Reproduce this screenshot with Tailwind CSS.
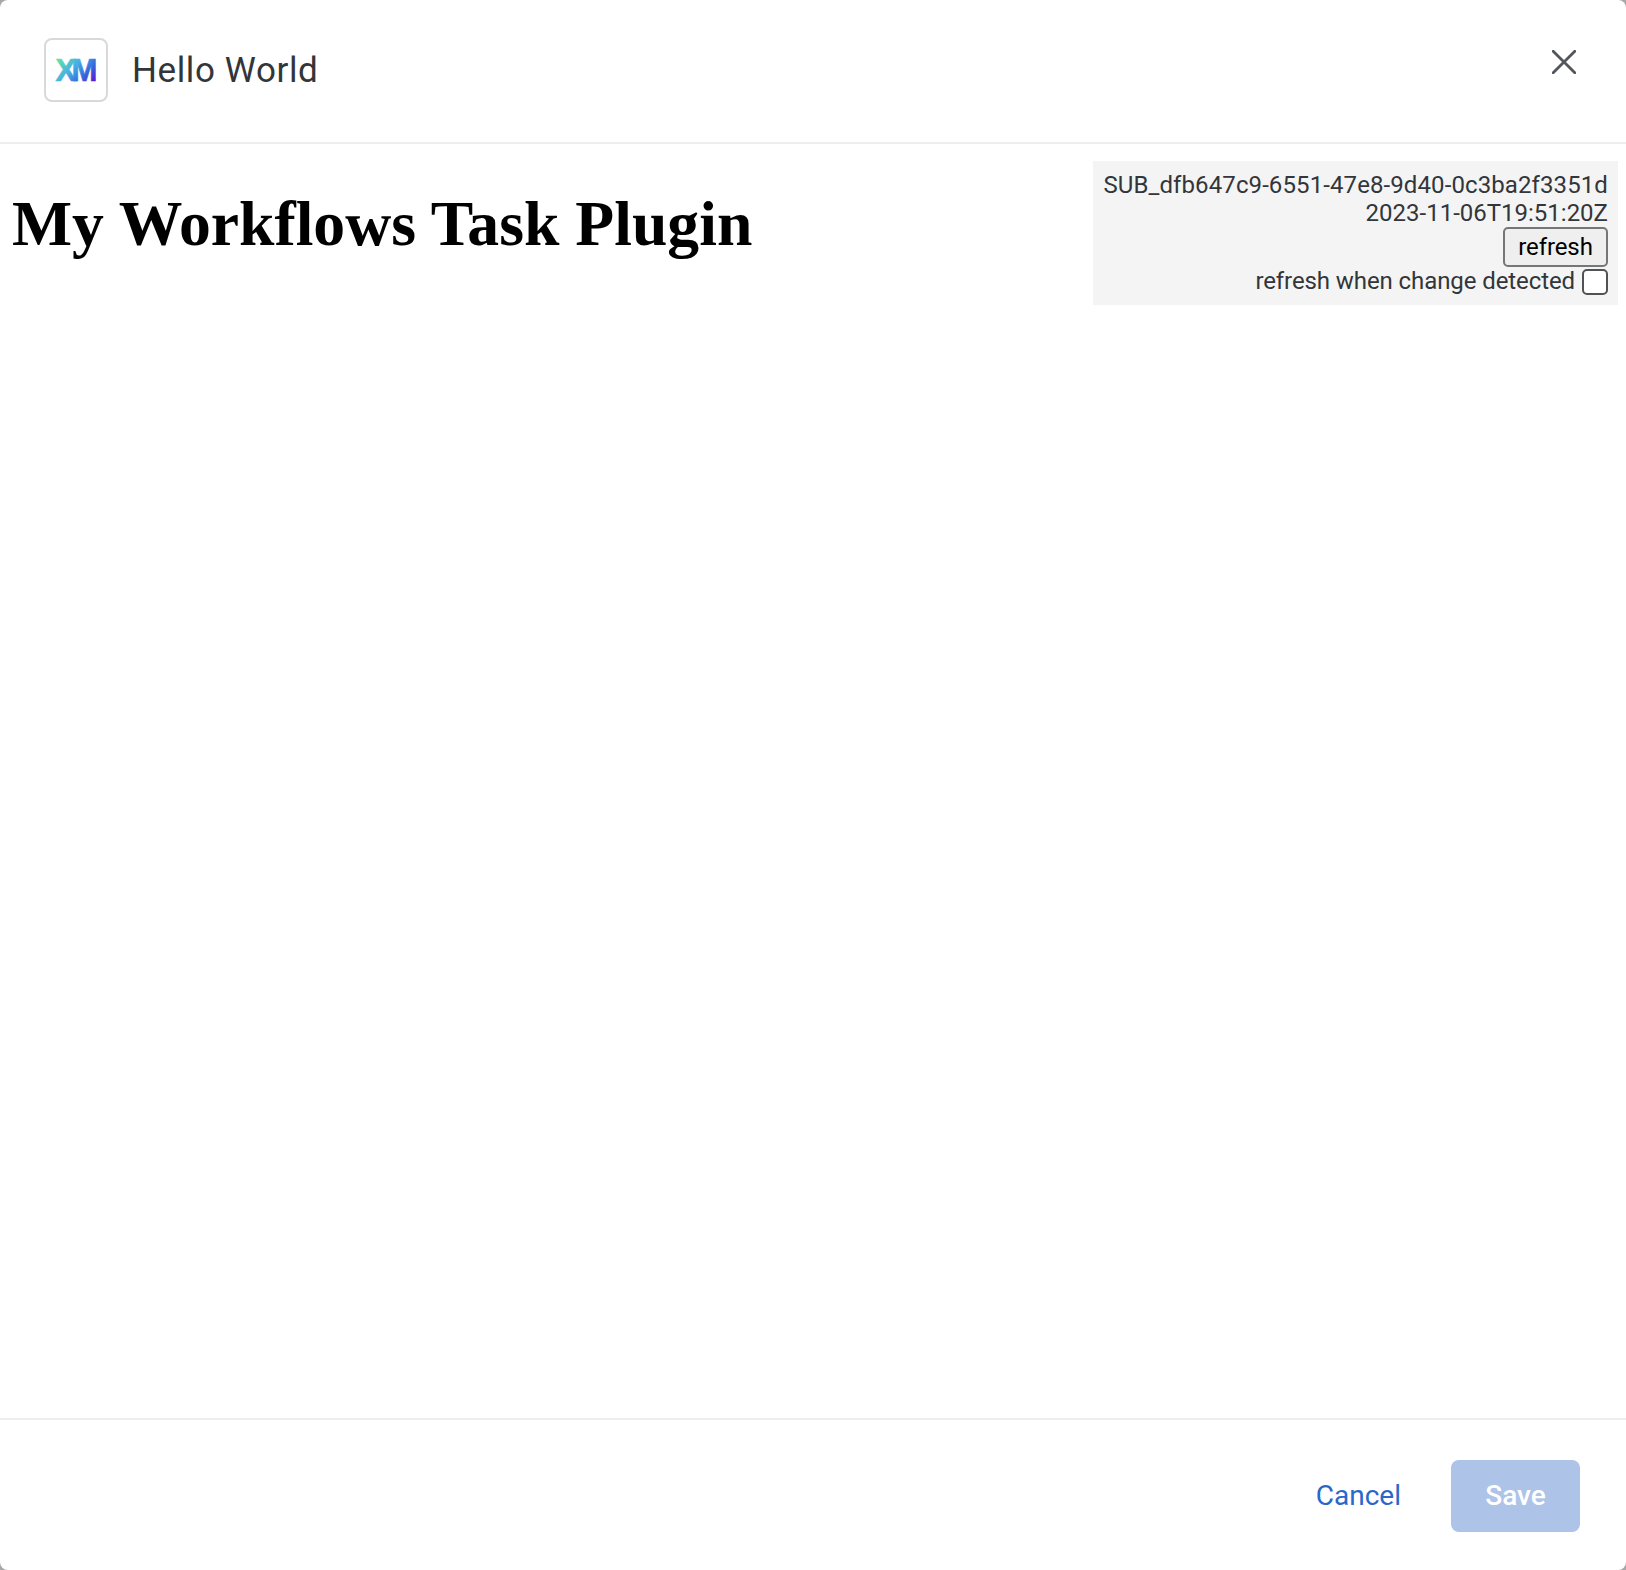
<!DOCTYPE html>
<html lang="en">
<head>
<meta charset="utf-8">
<title>Hello World</title>
<script src="https://cdn.jsdelivr.net/npm/@tailwindcss/browser@4"></script>
</head>
<body class="bg-[#a8a8a8] font-['Roboto',sans-serif] text-[#32363a]">
<div class="flex h-[1570px] w-[1626px] flex-col overflow-hidden rounded-[8px] bg-white">
  <header class="flex h-36 shrink-0 items-start justify-between border-b-2 border-[#eeeeee] pl-11 pr-[50px]">
    <div class="flex items-center gap-6 pt-[38px]">
      <div class="flex size-16 items-center justify-center rounded-lg border-2 border-[#d9d9d9]">
        <svg class="size-[60px]" viewBox="0 0 60 60" aria-label="XM">
          <defs><linearGradient id="xm" gradientUnits="userSpaceOnUse" x1="13" y1="16" x2="45" y2="46"><stop offset="0" stop-color="#5fe8a0"/><stop offset=".42" stop-color="#48aee6"/><stop offset=".72" stop-color="#3568dc"/><stop offset="1" stop-color="#5a14d4"/></linearGradient></defs>
          <text x="9.5" y="40.5" font-family="Liberation Sans, sans-serif" font-weight="700" font-size="31" letter-spacing="-4.6" fill="url(#xm)" stroke="url(#xm)" stroke-width=".7">XM</text>
        </svg>
      </div>
      <h2 class="pt-0.5 text-[35px] leading-[48px] font-[450] tracking-[0.6px]">Hello World</h2>
    </div>
    <button class="mt-[50px]" aria-label="Close">
      <svg class="size-6" viewBox="0 0 24 24" fill="none" stroke="#53565a" stroke-width="2.8" stroke-linecap="round"><path d="M1.2 1.2 22.8 22.8M22.8 1.2 1.2 22.8"/></svg>
    </button>
  </header>
  <main class="flex flex-1 items-start justify-between pl-3 pr-2 pt-[17px]">
    <h1 class="mt-[26px] font-['Liberation_Serif',serif] text-[63.7px] leading-[74px] font-bold text-black">My Workflows Task Plugin</h1>
    <div class="flex h-36 w-[525px] flex-col items-end bg-[#f4f4f4] p-[10px] text-2xl leading-[28px] whitespace-nowrap">
      <div class="tracking-[0.1px]">SUB_dfb647c9-6551-47e8-9d40-0c3ba2f3351d</div>
      <div>2023-11-06T19:51:20Z</div>
      <button class="h-10 w-[105px] rounded-[5px] border-2 border-[#767676] bg-[#efefef] tracking-[-0.1px] text-black">refresh</button>
      <label class="flex h-7 items-center gap-[7px]"><span class="tracking-[-0.09px]">refresh when change detected</span><span class="mt-0.5 size-[26px] rounded-[5px] border-2 border-[#505356] bg-white"></span></label>
    </div>
  </main>
  <footer class="flex h-[152px] shrink-0 items-start justify-end gap-[50px] border-t-2 border-[#eeeeee] pr-[46px] pt-10 text-[28px]">
    <button class="h-[72px] font-[450] text-[#2b67cb]">Cancel</button>
    <button class="h-[72px] w-[129px] rounded-lg bg-[#adc3e8] font-medium text-white">Save</button>
  </footer>
</div>
</body>
</html>
